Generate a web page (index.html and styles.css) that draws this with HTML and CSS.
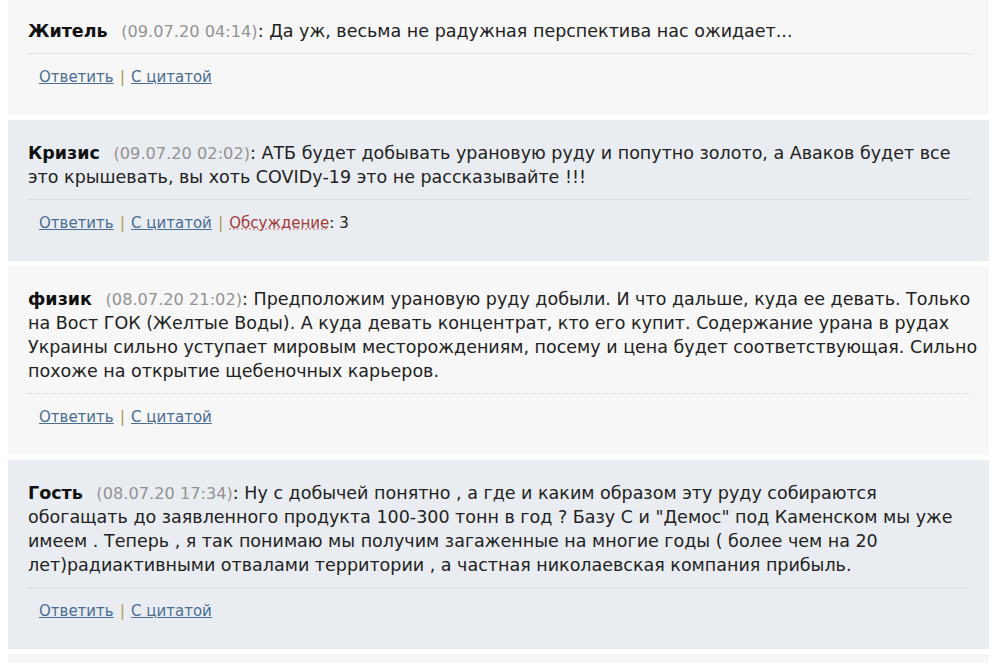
FILE: index.html
```html
<!DOCTYPE html>
<html lang="ru">
<head>
<meta charset="utf-8">
<title>Комментарии</title>
<link rel="stylesheet" href="styles.css">
</head>
<body>
<div class="comments">
  <div class="comment light">
    <p class="text"><b class="author">Житель</b> <span class="date">(09.07.20 04:14)</span>: Да уж, весьма не радужная перспектива нас ожидает...</p>
    <div class="actions"><a href="#">Ответить</a><span class="sep">|</span><a href="#">С цитатой</a></div>
  </div>
  <div class="comment dark">
    <p class="text"><b class="author">Кризис</b> <span class="date">(09.07.20 02:02)</span>: АТБ будет добывать урановую руду и попутно золото, а Аваков будет все<br>это крышевать, вы хоть COVIDу-19 это не рассказывайте !!!</p>
    <div class="actions"><a href="#">Ответить</a><span class="sep">|</span><a href="#">С цитатой</a><span class="sep">|</span><a href="#" class="discuss">Обсуждение</a>: 3</div>
  </div>
  <div class="comment light">
    <p class="text"><b class="author">физик</b> <span class="date">(08.07.20 21:02)</span>: Предположим урановую руду добыли. И что дальше, куда ее девать. Только<br>на Вост ГОК (Желтые Воды). А куда девать концентрат, кто его купит. Содержание урана в рудах<br>Украины сильно уступает мировым месторождениям, посему и цена будет соответствующая. Сильно<br>похоже на открытие щебеночных карьеров.</p>
    <div class="actions"><a href="#">Ответить</a><span class="sep">|</span><a href="#">С цитатой</a></div>
  </div>
  <div class="comment dark">
    <p class="text"><b class="author">Гость</b> <span class="date">(08.07.20 17:34)</span>: Ну с добычей понятно , а где и каким образом эту руду собираются<br>обогащать до заявленного продукта 100-300 тонн в год ? Базу С и "Демос" под Каменском мы уже<br>имеем . Теперь , я так понимаю мы получим загаженные на многие годы ( более чем на 20<br>лет)радиактивными отвалами территории , а частная николаевская компания прибыль.</p>
    <div class="actions"><a href="#">Ответить</a><span class="sep">|</span><a href="#">С цитатой</a></div>
  </div>
  <div class="comment light">
    <p class="text">&nbsp;</p>
  </div>
</div>
</body>
</html>
```
FILE: styles.css
```css
body {
  margin: 0;
  padding: 0 11px 0 8px;
  background: #fff;
  font-family: "DejaVu Sans", Verdana, sans-serif;
  font-size: 17.5px;
  color: #222;
}
.comments {
  display: flex;
  flex-direction: column;
  gap: 5px;
  margin-top: -2px;
}
.comment {
  padding: 21px 10px 26px 20px;
}
.comment.light { background: #f7f7f7; }
.comment.dark { background: #e9edf1; }
.text {
  margin: 0 9px 0 0;
  line-height: 24px;
  padding-bottom: 10px;
  border-bottom: 1px dotted #d2d2d2;
  white-space: nowrap;
}
.author {
  font-weight: bold;
  color: #111;
  margin-right: 8px;
}
.date {
  color: #939393;
  font-size: 16.2px;
  line-height: 1;
}
.actions {
  margin-top: 11px;
  line-height: 24px;
  padding-left: 11px;
  font-size: 15px;
  color: #222;
}
.actions a { color: #4a6d91; }
.sep {
  color: #b09a55;
  font-size: 16px;
  line-height: 1;
  margin: 0 6px;
}
.actions a.discuss {
  color: #a43a3a;
  text-decoration: underline dotted #d58a8a;
}
```
